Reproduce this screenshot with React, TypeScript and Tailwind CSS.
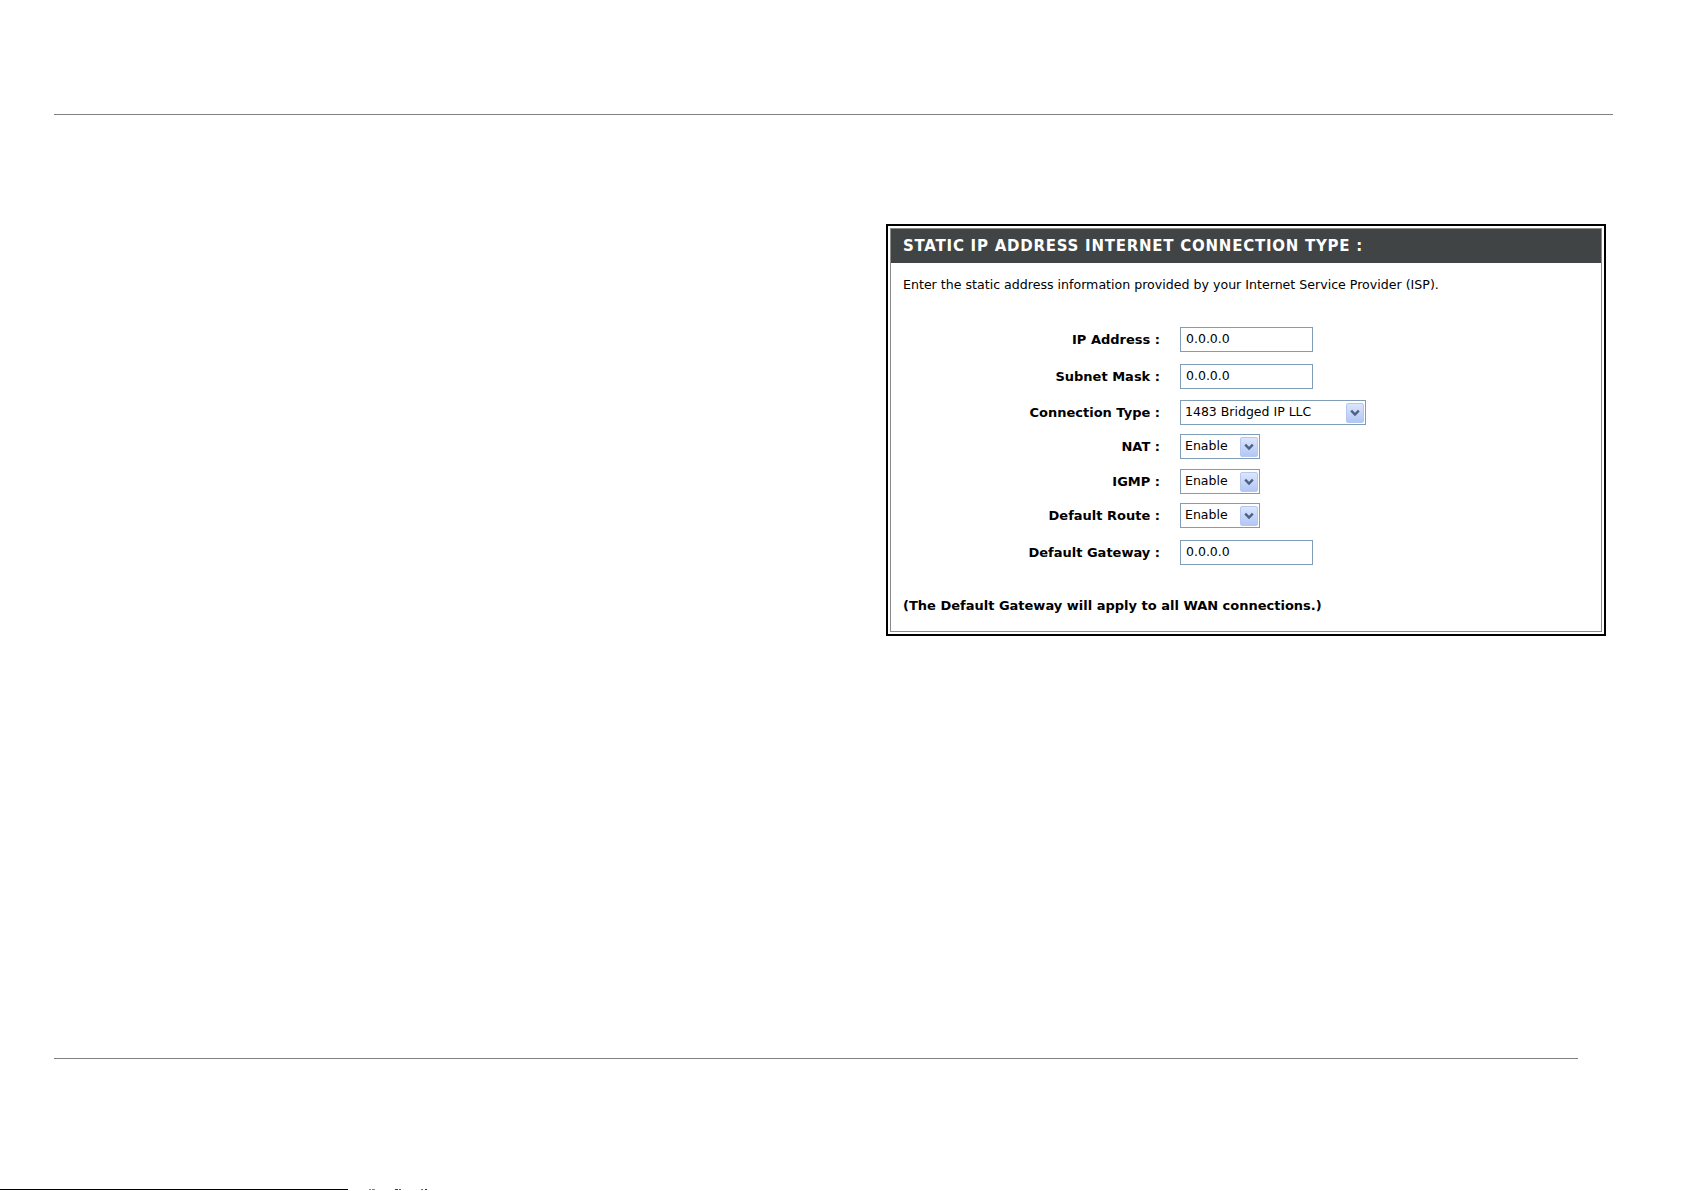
import React from 'react';

const font = { fontFamily: '"DejaVu Sans", Verdana, sans-serif' };

type Row = {
  label: string;
  kind: 'text' | 'select';
  value: string;
  width: string;
  gap: string;
};

const rows: Row[] = [
  { label: 'IP Address :', kind: 'text', value: '0.0.0.0', width: 'w-[133px]', gap: 'mt-0' },
  { label: 'Subnet Mask :', kind: 'text', value: '0.0.0.0', width: 'w-[133px]', gap: 'mt-[12px]' },
  { label: 'Connection Type :', kind: 'select', value: '1483 Bridged IP LLC', width: 'w-[186px]', gap: 'mt-[11px]' },
  { label: 'NAT :', kind: 'select', value: 'Enable', width: 'w-[80px]', gap: 'mt-[9px]' },
  { label: 'IGMP :', kind: 'select', value: 'Enable', width: 'w-[80px]', gap: 'mt-[10px]' },
  { label: 'Default Route :', kind: 'select', value: 'Enable', width: 'w-[80px]', gap: 'mt-[9px]' },
  { label: 'Default Gateway :', kind: 'text', value: '0.0.0.0', width: 'w-[133px]', gap: 'mt-[12px]' },
];

const ArrowButton: React.FC = () => (
  <span className="flex h-[20px] w-[18px] items-center justify-center rounded-[2px] border border-[#b5c8f2] bg-gradient-to-b from-[#dbe6fd] to-[#b2c7f4]">
    <svg width="10" height="8" viewBox="0 0 10 8">
      <path d="M1.2 1.6 L5 5.6 L8.8 1.6" fill="none" stroke="#4d6185" strokeWidth="2.4" />
    </svg>
  </span>
);

const Field: React.FC<{ row: Row }> = ({ row }) => {
  if (row.kind === 'text') {
    return (
      <div className={`flex h-[25px] ${row.width} items-center border border-[#7f9db9] bg-white px-[5px] text-[12.5px] text-black`}>
        {row.value}
      </div>
    );
  }
  return (
    <div className={`flex h-[25px] ${row.width} items-center justify-between border border-[#7f9db9] bg-white pl-[4px] pr-[1px] text-[12.5px] text-black`}>
      <span>{row.value}</span>
      <ArrowButton />
    </div>
  );
};

export default function App() {
  return (
    <div className="relative flex h-[1191px] w-[1685px] flex-col overflow-hidden bg-white" style={font}>
      <div className="ml-[54px] mt-[114px] h-px w-[1559px] bg-[#808080]" />

      <section className="ml-[886px] mt-[109px] h-[412px] w-[720px] border-2 border-black bg-white p-[2px]">
        <div className="flex h-full flex-col border border-[#8a8a8a]">
          <h2 className="flex h-[34px] items-center bg-[#404444] pl-[12px] text-[15px] font-bold leading-none tracking-[0.75px] text-white">
            STATIC IP ADDRESS INTERNET CONNECTION TYPE :
          </h2>
          <p className="mt-[14px] pl-[12px] text-[12.6px] leading-[16px] text-black">
            Enter the static address information provided by your Internet Service Provider (ISP).
          </p>

          <div className="mt-[34px] flex flex-col">
            {rows.map((row) => (
              <div key={row.label} className={`flex items-center ${row.gap}`}>
                <label className="w-[270px] pr-px text-right text-[13px] font-bold leading-[16px] text-black">{row.label}</label>
                <div className="ml-[19px]">
                  <Field row={row} />
                </div>
              </div>
            ))}
          </div>

          <p className="mt-[33px] pl-[12px] text-[13px] font-bold leading-[16px] text-black">
            (The Default Gateway will apply to all WAN connections.)
          </p>
        </div>
      </section>

      <div className="ml-[54px] mt-[422px] h-px w-[1524px] bg-[#808080]" />
      <div className="mt-[130px] flex h-px items-center">
        <div className="h-px w-[348px] bg-black" />
        <div className="ml-[21px] h-px w-[2px] bg-[#00c0c0]" />
        <div className="ml-[1px] h-px w-[3px] bg-[#c08000]" />
        <div className="ml-[20px] h-px w-[3px] bg-[#3030c0]" />
        <div className="ml-[1px] h-px w-[2px] bg-[#c03030]" />
        <div className="ml-[20px] h-px w-[2px] bg-[#30a030]" />
        <div className="ml-[2px] h-px w-[2px] bg-[#303030]" />
      </div>
    </div>
  );
}
